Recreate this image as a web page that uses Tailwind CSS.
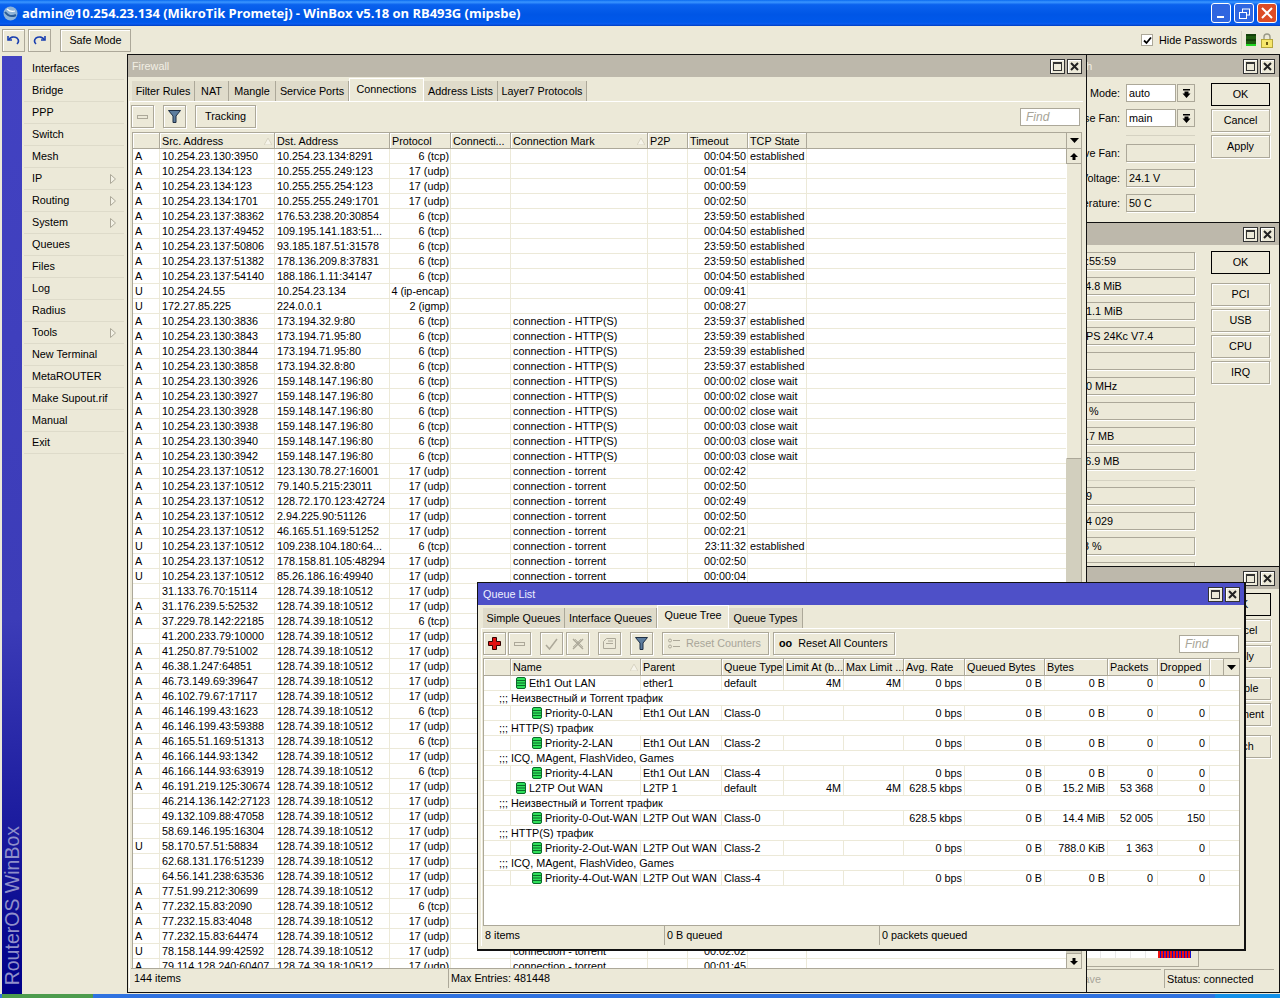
<!DOCTYPE html>
<html lang="en">
<head>
    <meta charset="UTF-8">
    <title>WinBox</title>
    <script src="https://cdn.jsdelivr.net/npm/@tailwindcss/browser@4"></script>
</head>
<body class="bg-[#ece9d8] font-['Liberation_Sans',sans-serif] text-[10.8px] leading-[15px] text-black">
<div class="w-[1280px] h-[998px] flex flex-col overflow-hidden">
    <!-- XP title bar -->
    <div class="h-[26px] shrink-0 flex items-center bg-[linear-gradient(180deg,#0a6af0_0%,#3a96ff_8%,#0a62ee_18%,#0056e6_55%,#0058ea_85%,#0a5cf0_92%,#003cc0_100%)]">
        <svg class="ml-[3px] w-[15px] h-[15px]" viewBox="0 0 15 15"><circle cx="7.5" cy="7.5" r="7" fill="#8fb4d8"/><path d="M2 6c3 4 7 5 11 3" stroke="#2a5c98" stroke-width="2" fill="none"/><path d="M4 3c2 2 5 3 8 2" stroke="#fff" stroke-width="1.2" fill="none"/></svg>
        <span class="ml-[4px] font-['Open_Sans',sans-serif] font-bold text-[13px] text-white tracking-[-0.03px] whitespace-nowrap">admin@10.254.23.134 (MikroTik Prometej) - WinBox v5.18 on RB493G (mipsbe)</span>
        <div class="ml-auto mr-[3px] flex gap-[3px]">
            <div class="w-[20px] h-[20px] rounded-[3px] border border-white bg-[#2f66e0] flex items-end pl-[5px] pb-[4px]"><div class="w-[7px] h-[2px] bg-white"></div></div>
            <div class="w-[20px] h-[20px] rounded-[3px] border border-white bg-[#2f66e0] flex items-center justify-center"><svg class="w-[11px] h-[11px]" viewBox="0 0 11 11" fill="none" stroke="#fff"><rect x="3.5" y="1" width="7" height="6"/><rect x="0.5" y="4.5" width="7" height="6" fill="#2f66e0"/></svg></div>
            <div class="w-[20px] h-[20px] rounded-[3px] border border-white bg-[#dc4c26] flex items-center justify-center"><svg class="w-[12px] h-[12px]" viewBox="0 0 12 12" stroke="#fff" stroke-width="2"><path d="M1 1l10 10M11 1L1 11"/></svg></div>
        </div>
    </div>

    <!-- Main toolbar -->
    <div class="h-[28px] shrink-0 flex items-center pl-[2px]">
        <div class="w-[23px] h-[23px] border border-[#aca899] shadow-[inset_1px_1px_0_#fff] flex items-center justify-center">
            <svg class="w-[13px] h-[11px]" viewBox="0 0 13 11" fill="none" stroke="#1a3fb0" stroke-width="1.6"><path d="M1 1v4h4"/><path d="M1.5 5C3 2 7 1 10 3c2 2 2 4 0 6"/></svg>
        </div>
        <div class="ml-[3px] w-[23px] h-[23px] border border-[#aca899] shadow-[inset_1px_1px_0_#fff] flex items-center justify-center">
            <svg class="w-[13px] h-[11px]" viewBox="0 0 13 11" fill="none" stroke="#1a3fb0" stroke-width="1.6"><path d="M12 1v4H8"/><path d="M11.5 5C10 2 6 1 3 3c-2 2-2 4 0 6"/></svg>
        </div>
        <div class="ml-[9px] w-[71px] h-[23px] border border-[#aca899] shadow-[inset_1px_1px_0_#fff] flex items-center justify-center">Safe Mode</div>
        <div class="ml-auto flex items-center">
            <div class="w-[12px] h-[12px] bg-white border border-[#aca899] flex items-center justify-center"><svg class="w-[9px] h-[9px]" viewBox="0 0 9 9" fill="none" stroke="#000" stroke-width="1.8"><path d="M1 4.5l2.5 2.5L8 1.5"/></svg></div>
            <span class="ml-[6px] w-[76px] whitespace-nowrap">Hide Passwords</span>
            <div class="ml-[6px] w-px h-[18px] bg-[#d5d2c2]"></div>
            <div class="ml-[4px] w-[10px] h-[12px] flex flex-col justify-between bg-[#1f5c10]"><div class="h-[2px] bg-[#13400a]"></div><div class="h-[2px] bg-[#13400a]"></div><div class="h-[2px] bg-[#22d622]"></div></div>
            <svg class="ml-[5px] mr-[7px] w-[12px] h-[15px]" viewBox="0 0 12 15"><path d="M3 7V4a3 3 0 0 1 6 0v3" fill="none" stroke="#9a9a88" stroke-width="1.4"/><rect x="0.5" y="6.5" width="11" height="8" fill="#f6e66a" stroke="#b5a63a"/><rect x="5" y="9" width="2" height="3" fill="#6a5a10"/></svg>
        </div>
    </div>

    <div class="h-[940px] shrink-0 flex">
        <!-- Side menu -->
        <div class="w-[127px] shrink-0 flex">
            <div class="ml-[2px] mt-[2px] w-[20px] h-[938px] flex items-end justify-center pb-[9px] bg-[linear-gradient(180deg,#4242c2_0%,#3c3cb8_60%,#000088_100%)]">
                <span class="[writing-mode:vertical-rl] rotate-180 text-[19.500px] leading-[20px] text-[#8f8fca] whitespace-nowrap">RouterOS WinBox</span>
            </div>
            <div id="menu" class="ml-[2px] mt-[4px] w-[100px]"></div>
        </div>

        <!-- Desktop with the open windows -->
        <div class="relative flex-1">
            <!-- Health -->
            <div class="absolute left-[873px] top-0 w-[280px] h-[169px] border border-[#111] bg-[#ece9d8]">
                <div class="h-[22px] flex items-center bg-[#bdb8ab] text-[#f2efe4] pl-[60px]"><span>Health</span><div class="win-btns ml-auto"></div></div>
                <div class="flex pt-[7px]">
                    <div class="w-[194px]">
                        <div class="h-[18px] flex items-center"><span class="w-[119px] text-right">Fan Mode:</span><div class="ml-[6px] w-[50px] h-[18px] bg-white border border-[#aca899] px-[2px] leading-[16px]">auto</div><div class="ml-px w-[18px] h-[18px] border border-[#aca899] flex items-center justify-center"><svg class="w-[9px] h-[9px]" viewBox="0 0 9 9"><path d="M1 0h7v1.5H1zM2.500 2.500h4v2h2L4.500 9 .5 4.500h2z"/></svg></div></div>
                        <div class="mt-[7px] h-[18px] flex items-center"><span class="w-[119px] text-right">Use Fan:</span><div class="ml-[6px] w-[50px] h-[18px] bg-white border border-[#aca899] px-[2px] leading-[16px]">main</div><div class="ml-px w-[18px] h-[18px] border border-[#aca899] flex items-center justify-center"><svg class="w-[9px] h-[9px]" viewBox="0 0 9 9"><path d="M1 0h7v1.5H1zM2.500 2.500h4v2h2L4.500 9 .5 4.500h2z"/></svg></div></div>
                        <div class="mt-[8px] ml-[125px] h-px bg-[#d5d2c2]"></div>
                        <div class="mt-[8px] h-[18px] flex items-center"><span class="w-[119px] text-right">Active Fan:</span><div class="ml-[6px] w-[69px] h-[18px] border border-[#aca899] shadow-[1px_1px_0_#fff] px-[2px] leading-[16px]"></div></div>
                        <div class="mt-[7px] h-[18px] flex items-center"><span class="w-[119px] text-right">Voltage:</span><div class="ml-[6px] w-[69px] h-[18px] border border-[#aca899] shadow-[1px_1px_0_#fff] px-[2px] leading-[16px]">24.1 V</div></div>
                        <div class="mt-[7px] h-[18px] flex items-center"><span class="w-[119px] text-right">Temperature:</span><div class="ml-[6px] w-[69px] h-[18px] border border-[#aca899] shadow-[1px_1px_0_#fff] px-[2px] leading-[16px]">50 C</div></div>
                    </div>
                    <div class="ml-[16px] -mt-px w-[59px] flex flex-col gap-[3px]">
                        <div class="h-[23px] border border-black flex items-center justify-center">OK</div>
                        <div class="h-[23px] border border-[#aca899] shadow-[inset_1px_1px_0_#fff,1px_1px_0_#fff] flex items-center justify-center">Cancel</div>
                        <div class="h-[23px] border border-[#aca899] shadow-[inset_1px_1px_0_#fff,1px_1px_0_#fff] flex items-center justify-center">Apply</div>
                    </div>
                </div>
            </div>

            <!-- Resources -->
            <div class="absolute left-[873px] top-[168px] w-[280px] h-[345px] border border-[#111] bg-[#ece9d8]">
                <div class="h-[22px] flex items-center bg-[#bdb8ab] text-[#f2efe4] pl-[30px]"><span>Resources</span><div class="win-btns ml-auto"></div></div>
                <div class="flex pt-[7px]">
                    <div id="res-fields" class="ml-[69px] w-[125px]"></div>
                    <div class="ml-[16px] -mt-px w-[59px] flex flex-col">
                        <div class="h-[23px] border border-black flex items-center justify-center">OK</div>
                        <div class="mt-[9px] h-[23px] border border-[#aca899] shadow-[inset_1px_1px_0_#fff,1px_1px_0_#fff] flex items-center justify-center">PCI</div>
                        <div class="mt-[3px] h-[23px] border border-[#aca899] shadow-[inset_1px_1px_0_#fff,1px_1px_0_#fff] flex items-center justify-center">USB</div>
                        <div class="mt-[3px] h-[23px] border border-[#aca899] shadow-[inset_1px_1px_0_#fff,1px_1px_0_#fff] flex items-center justify-center">CPU</div>
                        <div class="mt-[3px] h-[23px] border border-[#aca899] shadow-[inset_1px_1px_0_#fff,1px_1px_0_#fff] flex items-center justify-center">IRQ</div>
                    </div>
                </div>
            </div>

            <!-- Interface -->
            <div class="absolute left-[873px] top-[512px] w-[280px] h-[427px] border border-[#111] bg-[#ece9d8] flex flex-col">
                <div class="h-[22px] shrink-0 flex items-center bg-[#bdb8ab] text-[#f2efe4] pl-[30px]"><span>Interface</span><div class="win-btns ml-auto"></div></div>
                <div class="flex-1 flex justify-end pr-[8px] pt-[4px]">
                    <div class="w-[61px] flex flex-col">
                        <div class="h-[23px] border border-black flex items-center justify-center">OK</div>
                        <div class="mt-[3px] h-[23px] border border-[#aca899] shadow-[inset_1px_1px_0_#fff,1px_1px_0_#fff] flex items-center justify-center">Cancel</div>
                        <div class="mt-[3px] h-[23px] border border-[#aca899] shadow-[inset_1px_1px_0_#fff,1px_1px_0_#fff] flex items-center justify-center">Apply</div>
                        <div class="mt-[9px] h-[23px] border border-[#aca899] shadow-[inset_1px_1px_0_#fff,1px_1px_0_#fff] flex items-center justify-center">Disable</div>
                        <div class="mt-[3px] h-[23px] border border-[#aca899] shadow-[inset_1px_1px_0_#fff,1px_1px_0_#fff] flex items-center justify-center">Comment</div>
                        <div class="mt-[9px] h-[23px] border border-[#aca899] shadow-[inset_1px_1px_0_#fff,1px_1px_0_#fff] flex items-center justify-center">Torch</div>
                    </div>
                </div>
                <div class="ml-[69px] w-[129px] h-[40px] border-r border-b border-[#aca899] pr-[7px] pb-[8px]">
                    <div class="relative h-full bg-white bg-[repeating-linear-gradient(90deg,#e8e8e8_0_1px,transparent_1px_15px)]">
                        <div class="absolute right-0 bottom-0 w-[33px] h-[8px] bg-[repeating-linear-gradient(90deg,#ee1111_0_2px,#1111cc_2px_3px)]"></div>
                    </div>
                </div>
                <div class="mt-[2px] mb-[4px] h-[19px] flex">
                    <div class="ml-[50px] w-[110px] border-t border-l border-[#aca899] flex items-center justify-end pr-[60px] text-[#a8a598]">Slave</div>
                    <div class="ml-[3px] w-[110px] border-t border-l border-[#aca899] flex items-center pl-[2px]">Status: connected</div>
                </div>
            </div>

            <!-- Firewall -->
            <div class="absolute left-0 top-0 w-[960px] h-[939px] border border-[#111] bg-[#ece9d8] flex flex-col">
                <div class="h-[22px] shrink-0 flex items-center bg-[#bdb8ab] text-[#f2efe4] pl-[4px]"><span>Firewall</span><div class="win-btns ml-auto"></div></div>
                <div class="h-[24px] shrink-0 flex items-end pl-[4px]">
                    <div class="w-[63px] h-[20px] pt-px bg-[#dfdbca] border-r border-[#aca899] flex items-center justify-center">Filter Rules</div>
                    <div class="w-[34px] h-[20px] pt-px bg-[#dfdbca] border-r border-[#aca899] flex items-center justify-center">NAT</div>
                    <div class="w-[47px] h-[20px] pt-px bg-[#dfdbca] border-r border-[#aca899] flex items-center justify-center">Mangle</div>
                    <div class="w-[73px] h-[20px] pt-px bg-[#dfdbca] border-r border-[#aca899] flex items-center justify-center">Service Ports</div>
                    <div class="w-[75px] h-[23px] border-t border-l border-r border-white flex items-center justify-center pb-px">Connections</div>
                    <div class="w-[74px] h-[20px] pt-px bg-[#dfdbca] border-r border-[#aca899] flex items-center justify-center">Address Lists</div>
                    <div class="w-[89px] h-[20px] pt-px bg-[#dfdbca] border-r border-[#aca899] flex items-center justify-center">Layer7 Protocols</div>
                </div>
                <div class="flex-1 ml-px mr-[3px] mb-[4px] border-t border-l border-white border-r-[#aca899] px-px flex flex-col min-h-0">
                    <div class="h-[23px] mt-[3px] shrink-0 flex items-center">
                        <div class="w-[23px] h-[23px] border border-[#aca899] shadow-[inset_1px_1px_0_#fff,1px_1px_0_#fff] flex items-center justify-center"><div class="w-[11px] h-[4px] bg-[#ece9d8] border border-[#aca899]"></div></div>
                        <div class="ml-[9px] w-[23px] h-[23px] border border-[#aca899] shadow-[inset_1px_1px_0_#fff,1px_1px_0_#fff] flex items-center justify-center"><svg class="w-[13px] h-[13px]" viewBox="0 0 13 13"><path d="M.5.5h12L8 6v6.500H5V6z" fill="#5d7d9e" stroke="#1f2f44"/></svg></div>
                        <div class="ml-[9px] w-[61px] h-[23px] border border-[#aca899] shadow-[inset_1px_1px_0_#fff,1px_1px_0_#fff] flex items-center justify-center">Tracking</div>
                        <div class="ml-auto mr-[2px] w-[60px] h-[18px] bg-white border border-[#aca899] pl-[5px] italic text-[#a8a598] text-[12px] leading-[16px]">Find</div>
                    </div>
                    <!-- Connections table -->
                    <div class="mt-[4px] ml-px flex-1 min-h-0 flex flex-col border-l border-[#aca899]">
                        <div class="h-[17px] shrink-0 flex border-t border-[#aca899]">
                            <div class="w-[27px] border-r border-b border-[#aca899] shadow-[inset_1px_1px_0_#fff]"></div>
                            <div class="w-[115px] border-r border-b border-[#aca899] shadow-[inset_1px_1px_0_#fff] pl-[2px] pt-px flex items-center justify-between pr-[2px]"><span>Src. Address</span><svg class="w-[8px] h-[7px]" viewBox="0 0 8 7"><path d="M4 0l4 7H0z" fill="#f6f4ea" stroke="#d8d4c2"/></svg></div>
                            <div class="w-[115px] border-r border-b border-[#aca899] shadow-[inset_1px_1px_0_#fff] pl-[2px] pt-px">Dst. Address</div>
                            <div class="w-[61px] border-r border-b border-[#aca899] shadow-[inset_1px_1px_0_#fff] pl-[2px] pt-px">Protocol</div>
                            <div class="w-[60px] border-r border-b border-[#aca899] shadow-[inset_1px_1px_0_#fff] pl-[2px] pt-px whitespace-nowrap overflow-hidden">Connecti...</div>
                            <div class="w-[137px] border-r border-b border-[#aca899] shadow-[inset_1px_1px_0_#fff] pl-[2px] pt-px flex items-center justify-between pr-[2px]"><span>Connection Mark</span><svg class="w-[8px] h-[7px]" viewBox="0 0 8 7"><path d="M4 0l4 7H0z" fill="#f6f4ea" stroke="#d8d4c2"/></svg></div>
                            <div class="w-[40px] border-r border-b border-[#aca899] shadow-[inset_1px_1px_0_#fff] pl-[2px] pt-px">P2P</div>
                            <div class="w-[60px] border-r border-b border-[#aca899] shadow-[inset_1px_1px_0_#fff] pl-[2px] pt-px">Timeout</div>
                            <div class="w-[59px] border-r border-b border-[#aca899] shadow-[inset_1px_1px_0_#fff] pl-[2px] pt-px">TCP State</div>
                            <div class="flex-1 border-b border-[#aca899]"></div>
                            <div class="w-[16px] border-l border-r border-b border-[#aca899] flex items-center justify-center"><svg class="w-[9px] h-[5px]" viewBox="0 0 9 5"><path d="M0 0h9L4.500 5z"/></svg></div>
                        </div>
                        <div class="flex-1 min-h-0 flex">
                            <div id="fw-rows" class="flex-1 bg-white overflow-hidden"></div>
                            <div class="w-[16px] shrink-0 flex flex-col border-r border-[#aca899]">
                                <div class="h-[15px] border-b border-l border-[#aca899] flex items-center justify-center"><svg class="w-[8px] h-[7px]" viewBox="0 0 8 7"><path d="M4 0l4 4H5.500v3h-3V4H0z"/></svg></div>
                                <div class="h-[295px] border-l border-white border-b-[#aca899] border-b"></div>
                                <div class="flex-1 bg-[#d2cfbe]"></div>
                                <div class="h-[15px] border-t border-l border-[#aca899] flex items-center justify-center"><svg class="w-[8px] h-[7px]" viewBox="0 0 8 7"><path d="M2.500 0h3v3H8L4 7 0 3h2.500z"/></svg></div>
                            </div>
                        </div>
                    </div>
                    <div class="h-[20px] shrink-0 flex border-t border-[#aca899]">
                        <div class="w-[318px] pl-[3px] border-r border-[#aca899] flex items-center">144 items</div>
                        <div class="flex-1 pl-[2px] flex items-center">Max Entries: 481448</div>
                    </div>
                </div>
            </div>

            <!-- Queue List -->
            <div class="absolute left-[350px] top-[528px] w-[769px] h-[369px] border border-[#111] border-r-2 border-b-2 bg-[#ece9d8] flex flex-col">
                <div class="h-[22px] shrink-0 flex items-center bg-[#4e50c8] text-[#eef0ff] pl-[5px]"><span>Queue List</span><div class="win-btns ml-auto"></div></div>
                <div class="h-[23px] shrink-0 flex items-end pl-[5px]">
                    <div class="w-[82px] h-[20px] bg-[#dfdbca] border-r border-[#aca899] flex items-center justify-center">Simple Queues</div>
                    <div class="w-[92px] h-[20px] bg-[#dfdbca] border-r border-[#aca899] flex items-center justify-center">Interface Queues</div>
                    <div class="w-[72px] h-[23px] border-t border-l border-r border-white flex items-center justify-center pb-[3px]">Queue Tree</div>
                    <div class="w-[74px] h-[20px] bg-[#dfdbca] border-r border-[#aca899] flex items-center justify-center">Queue Types</div>
                </div>
                <div class="flex-1 min-h-0 ml-[3px] mr-[3px] mb-[3px] border-t border-l border-white pl-px pr-px flex flex-col">
                    <div class="h-[23px] mt-[3px] shrink-0 flex items-center">
                        <div class="w-[23px] h-[23px] border border-[#aca899] shadow-[inset_1px_1px_0_#fff,1px_1px_0_#fff] flex items-center justify-center"><svg class="w-[13px] h-[13px]" viewBox="0 0 13 13"><path d="M4.500.5h4v4h4v4h-4v4h-4v-4h-4v-4h4z" fill="#e01010" stroke="#300"/></svg></div>
                        <div class="ml-[2px] w-[23px] h-[23px] border border-[#aca899] shadow-[inset_1px_1px_0_#fff,1px_1px_0_#fff] flex items-center justify-center"><div class="w-[11px] h-[4px] border border-[#aca899]"></div></div>
                        <div class="ml-[9px] w-[23px] h-[23px] border border-[#aca899] shadow-[inset_1px_1px_0_#fff,1px_1px_0_#fff] flex items-center justify-center"><svg class="w-[13px] h-[12px]" viewBox="0 0 13 12" fill="none" stroke="#aca899" stroke-width="1.500"><path d="M1 7l3.500 4L12 1"/></svg></div>
                        <div class="ml-[3px] w-[23px] h-[23px] border border-[#aca899] shadow-[inset_1px_1px_0_#fff,1px_1px_0_#fff] flex items-center justify-center"><svg class="w-[12px] h-[12px]" viewBox="0 0 12 12" fill="none" stroke="#aca899" stroke-width="1.500"><path d="M1 1l10 10M11 1L1 11"/><path d="M3 1l8 8M9 1L1 9" stroke-width=".8"/></svg></div>
                        <div class="ml-[9px] w-[23px] h-[23px] border border-[#aca899] shadow-[inset_1px_1px_0_#fff,1px_1px_0_#fff] flex items-center justify-center"><svg class="w-[13px] h-[11px]" viewBox="0 0 13 11" fill="none" stroke="#aca899"><path d="M.5 3.500L3.500.5h9v10H.5z"/><path d="M5 3h5M3 5.500h7"/></svg></div>
                        <div class="ml-[9px] w-[23px] h-[23px] border border-[#aca899] shadow-[inset_1px_1px_0_#fff,1px_1px_0_#fff] flex items-center justify-center"><svg class="w-[13px] h-[13px]" viewBox="0 0 13 13"><path d="M.5.5h12L8 6v6.500H5V6z" fill="#5d7d9e" stroke="#1f2f44"/></svg></div>
                        <div class="ml-[9px] w-[107px] h-[23px] border border-[#aca899] shadow-[inset_1px_1px_0_#fff,1px_1px_0_#fff] flex items-center pl-[5px] text-[#a8a598]"><svg class="w-[12px] h-[11px] mr-[6px]" viewBox="0 0 12 11" fill="none" stroke="#aca899"><circle cx="2" cy="2.500" r="1.500"/><circle cx="2" cy="8.500" r="1.500"/><path d="M5 2.500h7M5 8.500h7"/></svg>Reset Counters</div>
                        <div class="ml-[4px] w-[122px] h-[23px] border border-[#aca899] shadow-[inset_1px_1px_0_#fff,1px_1px_0_#fff] flex items-center pl-[5px]"><span class="font-bold mr-[6px]">oo</span>Reset All Counters</div>
                        <div class="ml-auto mr-px w-[60px] h-[18px] bg-white border border-[#aca899] pl-[5px] italic text-[#a8a598] text-[12px] leading-[16px]">Find</div>
                    </div>
                    <!-- Queue tree table -->
                    <div class="mt-[3px] h-[267px] shrink-0 flex flex-col border-l border-r border-t border-[#aca899]">
                        <div class="h-[17px] shrink-0 flex">
                            <div class="w-[27px] border-r border-b border-[#aca899] shadow-[inset_1px_1px_0_#fff]"></div>
                            <div class="w-[130px] border-r border-b border-[#aca899] shadow-[inset_1px_1px_0_#fff] pl-[2px] pt-px flex items-center justify-between pr-[2px]"><span>Name</span><svg class="w-[8px] h-[7px]" viewBox="0 0 8 7"><path d="M4 0l4 7H0z" fill="#f6f4ea" stroke="#d8d4c2"/></svg></div>
                            <div class="w-[81px] border-r border-b border-[#aca899] shadow-[inset_1px_1px_0_#fff] pl-[2px] pt-px">Parent</div>
                            <div class="w-[62px] border-r border-b border-[#aca899] shadow-[inset_1px_1px_0_#fff] pl-[2px] pt-px whitespace-nowrap overflow-hidden">Queue Type</div>
                            <div class="w-[60px] border-r border-b border-[#aca899] shadow-[inset_1px_1px_0_#fff] pl-[2px] pt-px whitespace-nowrap overflow-hidden">Limit At (b...</div>
                            <div class="w-[60px] border-r border-b border-[#aca899] shadow-[inset_1px_1px_0_#fff] pl-[2px] pt-px whitespace-nowrap overflow-hidden">Max Limit ...</div>
                            <div class="w-[61px] border-r border-b border-[#aca899] shadow-[inset_1px_1px_0_#fff] pl-[2px] pt-px">Avg. Rate</div>
                            <div class="w-[80px] border-r border-b border-[#aca899] shadow-[inset_1px_1px_0_#fff] pl-[2px] pt-px">Queued Bytes</div>
                            <div class="w-[63px] border-r border-b border-[#aca899] shadow-[inset_1px_1px_0_#fff] pl-[2px] pt-px">Bytes</div>
                            <div class="w-[50px] border-r border-b border-[#aca899] shadow-[inset_1px_1px_0_#fff] pl-[2px] pt-px">Packets</div>
                            <div class="w-[52px] border-r border-b border-[#aca899] shadow-[inset_1px_1px_0_#fff] pl-[2px] pt-px">Dropped</div>
                            <div class="w-[14px] border-r border-b border-[#aca899] shadow-[inset_1px_1px_0_#fff]"></div>
                            <div class="flex-1 border-b border-[#aca899] flex items-center justify-center"><svg class="w-[9px] h-[5px]" viewBox="0 0 9 5"><path d="M0 0h9L4.500 5z"/></svg></div>
                        </div>
                        <div id="q-rows" class="flex-1 bg-white overflow-hidden"></div>
                    </div>
                    <div class="h-[20px] shrink-0 flex border-t border-[#aca899]">
                        <div class="w-[182px] pl-[2px] border-r border-[#aca899] flex items-center">8 items</div>
                        <div class="w-[215px] pl-[2px] border-r border-[#aca899] flex items-center">0 B queued</div>
                        <div class="flex-1 pl-[2px] flex items-center">0 packets queued</div>
                    </div>
                </div>
            </div>
        </div>
    </div>

    <!-- Start bar edge -->
    <div class="h-[4px] shrink-0 flex bg-[#2f72e0]">
        <div class="ml-[2px] w-[91px] bg-[#4d9c4d]"></div>
        <div class="ml-auto w-[65px] bg-[#1290e8]"></div>
    </div>
</div>

<script>
    const winBtns = `
        <div class="flex gap-[2px] mr-[4px]">
            <div class="w-[15px] h-[15px] border border-[#333] bg-[#ece9d8] shadow-[inset_1px_1px_0_#fff] flex items-center justify-center"><div class="w-[9px] h-[9px] border border-[#333] border-t-2"></div></div>
            <div class="w-[15px] h-[15px] border border-[#333] bg-[#ece9d8] shadow-[inset_1px_1px_0_#fff] flex items-center justify-center"><svg class="w-[9px] h-[9px]" viewBox="0 0 9 9" stroke="#222" stroke-width="2"><path d="M1 1l7 7M8 1L1 8"/></svg></div>
        </div>`;
    document.querySelectorAll(".win-btns").forEach(el => el.innerHTML = winBtns);

    // Side menu
    const menu = ["Interfaces", "Bridge", "PPP", "Switch", "Mesh", "IP>", "Routing>", "System>", "Queues", "Files", "Log", "Radius", "Tools>", "New Terminal", "MetaROUTER", "Make Supout.rif", "Manual", "Exit"];
    document.getElementById("menu").innerHTML = menu.map(m => `
        <div class="h-[22px] border-b border-[#dedbca] pl-[8px] pr-[8px] flex items-center justify-between">
            <span>${m.replace(">", "")}</span>
            ${m.endsWith(">") ? '<svg class="w-[6px] h-[10px]" viewBox="0 0 6 10"><path d="M.5.5L5.500 5 .5 9.500z" fill="#f4f2e6" stroke="#aca899"/></svg>' : ""}
        </div>`).join("");

    // Resources fields
    const resources = ["13:55:59", "114.8 MiB", "131.1 MiB", "MIPS 24Kc V7.4", "", "680 MHz", "10 %", "21.7 MB", "116.9 MB", "-", "179", "124 029", "1.8 %", ""];
    document.getElementById("res-fields").innerHTML = resources.map(v => v === "-"
        ? '<div class="h-[10px] -mt-[2px] mb-[2px] flex items-center"><div class="w-full h-px bg-[#d5d2c2]"></div></div>'
        : `<div class="h-[18px] mb-[7px] border border-[#aca899] shadow-[1px_1px_0_#fff] pl-[3px] leading-[16px] whitespace-nowrap">${v}</div>`).join("");

    // Firewall connections
    const H = "connection - HTTP(S)", T = "connection - torrent", W = "128.74.39.18:10512", S = "10.254.23.137:10512";
    const conns = [
        ["A","10.254.23.130:3950","10.254.23.134:8291","6 (tcp)","","00:04:50","established"],
        ["A","10.254.23.134:123","10.255.255.249:123","17 (udp)","","00:01:54",""],
        ["A","10.254.23.134:123","10.255.255.254:123","17 (udp)","","00:00:59",""],
        ["A","10.254.23.134:1701","10.255.255.249:1701","17 (udp)","","00:02:50",""],
        ["A","10.254.23.137:38362","176.53.238.20:30854","6 (tcp)","","23:59:50","established"],
        ["A","10.254.23.137:49452","109.195.141.183:51...","6 (tcp)","","00:04:50","established"],
        ["A","10.254.23.137:50806","93.185.187.51:31578","6 (tcp)","","23:59:50","established"],
        ["A","10.254.23.137:51382","178.136.209.8:37831","6 (tcp)","","23:59:50","established"],
        ["A","10.254.23.137:54140","188.186.1.11:34147","6 (tcp)","","00:04:50","established"],
        ["U","10.254.24.55","10.254.23.134","4 (ip-encap)","","00:09:41",""],
        ["U","172.27.85.225","224.0.0.1","2 (igmp)","","00:08:27",""],
        ["A","10.254.23.130:3836","173.194.32.9:80","6 (tcp)",H,"23:59:37","established"],
        ["A","10.254.23.130:3843","173.194.71.95:80","6 (tcp)",H,"23:59:39","established"],
        ["A","10.254.23.130:3844","173.194.71.95:80","6 (tcp)",H,"23:59:39","established"],
        ["A","10.254.23.130:3858","173.194.32.8:80","6 (tcp)",H,"23:59:37","established"],
        ["A","10.254.23.130:3926","159.148.147.196:80","6 (tcp)",H,"00:00:02","close wait"],
        ["A","10.254.23.130:3927","159.148.147.196:80","6 (tcp)",H,"00:00:02","close wait"],
        ["A","10.254.23.130:3928","159.148.147.196:80","6 (tcp)",H,"00:00:02","close wait"],
        ["A","10.254.23.130:3938","159.148.147.196:80","6 (tcp)",H,"00:00:03","close wait"],
        ["A","10.254.23.130:3940","159.148.147.196:80","6 (tcp)",H,"00:00:03","close wait"],
        ["A","10.254.23.130:3942","159.148.147.196:80","6 (tcp)",H,"00:00:03","close wait"],
        ["A",S,"123.130.78.27:16001","17 (udp)",T,"00:02:42",""],
        ["A",S,"79.140.5.215:23011","17 (udp)",T,"00:02:50",""],
        ["A",S,"128.72.170.123:42724","17 (udp)",T,"00:02:49",""],
        ["A",S,"2.94.225.90:51126","17 (udp)",T,"00:02:50",""],
        ["A",S,"46.165.51.169:51252","17 (udp)",T,"00:02:21",""],
        ["U",S,"109.238.104.180:64...","6 (tcp)",T,"23:11:32","established"],
        ["A",S,"178.158.81.105:48294","17 (udp)",T,"00:02:50",""],
        ["U",S,"85.26.186.16:49940","17 (udp)",T,"00:00:04",""],
        ["","31.133.76.70:15114",W,"17 (udp)"],
        ["A","31.176.239.5:52532",W,"17 (udp)"],
        ["A","37.229.78.142:22185",W,"6 (tcp)"],
        ["","41.200.233.79:10000",W,"17 (udp)"],
        ["A","41.250.87.79:51002",W,"17 (udp)"],
        ["A","46.38.1.247:64851",W,"17 (udp)"],
        ["A","46.73.149.69:39647",W,"17 (udp)"],
        ["A","46.102.79.67:17117",W,"17 (udp)"],
        ["A","46.146.199.43:1623",W,"6 (tcp)"],
        ["A","46.146.199.43:59388",W,"17 (udp)"],
        ["A","46.165.51.169:51313",W,"6 (tcp)"],
        ["A","46.166.144.93:1342",W,"17 (udp)"],
        ["A","46.166.144.93:63919",W,"6 (tcp)"],
        ["A","46.191.219.125:30674",W,"17 (udp)"],
        ["","46.214.136.142:27123",W,"17 (udp)"],
        ["","49.132.109.88:47058",W,"17 (udp)"],
        ["","58.69.146.195:16304",W,"17 (udp)"],
        ["U","58.170.57.51:58834",W,"17 (udp)"],
        ["","62.68.131.176:51239",W,"17 (udp)"],
        ["","64.56.141.238:63536",W,"17 (udp)"],
        ["A","77.51.99.212:30699",W,"17 (udp)"],
        ["A","77.232.15.83:2090",W,"6 (tcp)"],
        ["A","77.232.15.83:4048",W,"17 (udp)"],
        ["A","77.232.15.83:64474",W,"17 (udp)"],
        ["U","78.158.144.99:42592",W,"17 (udp)",T,"00:02:02",""],
        ["A","79.114.128.240:60407",W,"17 (udp)",T,"00:01:45",""]
    ];
    document.getElementById("fw-rows").innerHTML = conns.map(c => `
        <div class="h-[15px] flex border-b border-[#ece9d8] whitespace-nowrap">
            <div class="w-[27px] pl-[2px] border-r border-[#ece9d8]">${c[0]}</div>
            <div class="w-[115px] pl-[2px] border-r border-[#ece9d8]">${c[1]}</div>
            <div class="w-[115px] pl-[2px] border-r border-[#ece9d8]">${c[2]}</div>
            <div class="w-[61px] pr-[1px] text-right border-r border-[#ece9d8]">${c[3]}</div>
            <div class="w-[60px] border-r border-[#ece9d8]"></div>
            <div class="w-[137px] pl-[2px] border-r border-[#ece9d8]">${c[4] || ""}</div>
            <div class="w-[40px] border-r border-[#ece9d8]"></div>
            <div class="w-[60px] pr-[1px] text-right border-r border-[#ece9d8]">${c[5] || ""}</div>
            <div class="w-[59px] pl-[2px] border-r border-[#ece9d8]">${c[6] || ""}</div>
        </div>`).join("");

    // Queue tree
    const queueIcon = '<svg class="w-[10px] h-[12px] mr-[3px] shrink-0" viewBox="0 0 10 12"><rect x=".5" y=".5" width="9" height="11" rx="1.500" fill="#2fe05a" stroke="#0a6a28"/><path d="M.5 3.500h9M.5 6h9M.5 8.500h9" stroke="#0a6a28"/></svg>';
    const C1 = ";;; Неизвестный и Torrent трафик", C2 = ";;; HTTP(S) трафик", C3 = ";;; ICQ, MAgent, FlashVideo, Games";
    const queues = [
        [0,"Eth1 Out LAN","ether1","default","4M","4M","0 bps","0 B","0 B","0","0"], C1,
        [1,"Priority-0-LAN","Eth1 Out LAN","Class-0","","","0 bps","0 B","0 B","0","0"], C2,
        [1,"Priority-2-LAN","Eth1 Out LAN","Class-2","","","0 bps","0 B","0 B","0","0"], C3,
        [1,"Priority-4-LAN","Eth1 Out LAN","Class-4","","","0 bps","0 B","0 B","0","0"],
        [0,"L2TP Out WAN","L2TP 1","default","4M","4M","628.5 kbps","0 B","15.2 MiB","53 368","0"], C1,
        [1,"Priority-0-Out-WAN","L2TP Out WAN","Class-0","","","628.5 kbps","0 B","14.4 MiB","52 005","150"], C2,
        [1,"Priority-2-Out-WAN","L2TP Out WAN","Class-2","","","0 bps","0 B","788.0 KiB","1 363","0"], C3,
        [1,"Priority-4-Out-WAN","L2TP Out WAN","Class-4","","","0 bps","0 B","0 B","0","0"]
    ];
    document.getElementById("q-rows").innerHTML = queues.map(q => typeof q === "string"
        ? `<div class="h-[15px] border-b border-[#ece9d8] pl-[15px] whitespace-nowrap">${q}</div>`
        : `<div class="h-[15px] flex border-b border-[#ece9d8] whitespace-nowrap">
            <div class="w-[27px] border-r border-[#ece9d8]"></div>
            <div class="w-[130px] border-r border-[#ece9d8] flex items-center ${q[0] ? "pl-[21px]" : "pl-[5px]"}">${queueIcon}${q[1]}</div>
            <div class="w-[81px] pl-[2px] border-r border-[#ece9d8]">${q[2]}</div>
            <div class="w-[62px] pl-[2px] border-r border-[#ece9d8]">${q[3]}</div>
            <div class="w-[60px] pr-[2px] text-right border-r border-[#ece9d8]">${q[4]}</div>
            <div class="w-[60px] pr-[2px] text-right border-r border-[#ece9d8]">${q[5]}</div>
            <div class="w-[61px] pr-[2px] text-right border-r border-[#ece9d8]">${q[6]}</div>
            <div class="w-[80px] pr-[2px] text-right border-r border-[#ece9d8]">${q[7]}</div>
            <div class="w-[63px] pr-[2px] text-right border-r border-[#ece9d8]">${q[8]}</div>
            <div class="w-[50px] pr-[4px] text-right border-r border-[#ece9d8]">${q[9]}</div>
            <div class="w-[52px] pr-[4px] text-right border-r border-[#ece9d8]">${q[10]}</div>
        </div>`).join("");
</script>
</body>
</html>
